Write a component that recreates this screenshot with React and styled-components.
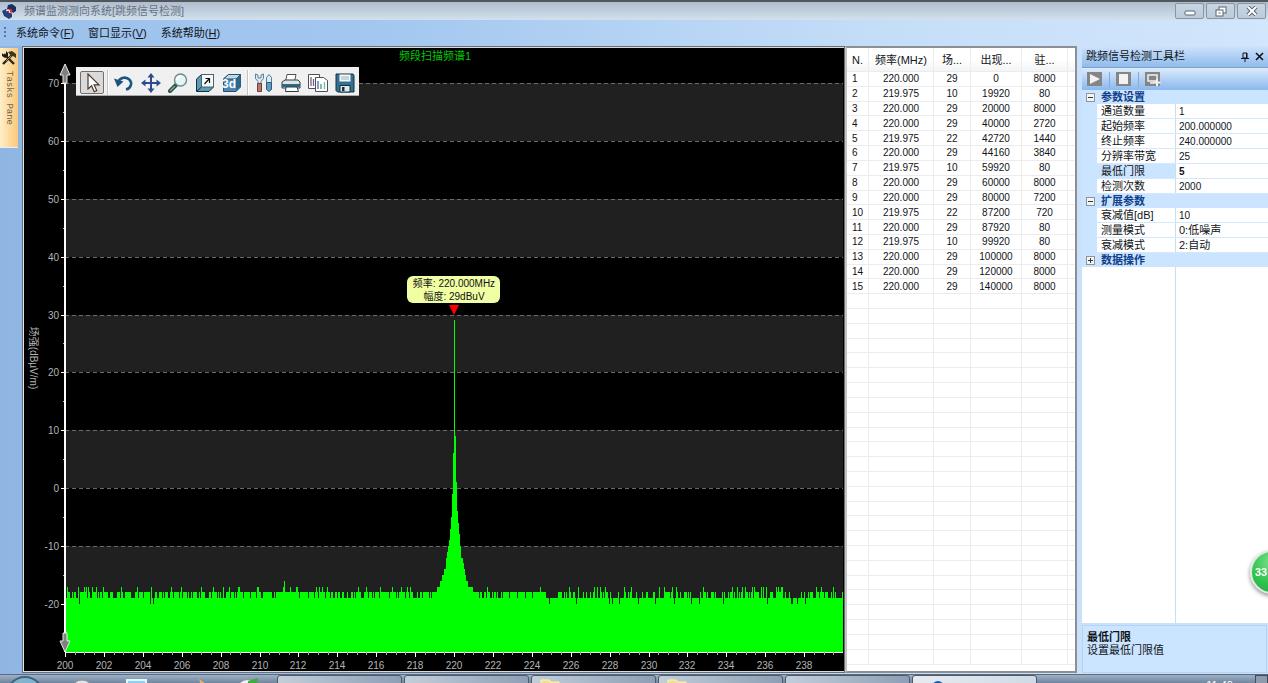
import React, { useLayoutEffect, useRef, useState } from "react";
import styled, { createGlobalStyle } from "styled-components";

const GlobalStyle = createGlobalStyle`
  * {
    box-sizing: border-box;
  }

  body {
    margin: 0;
    background: #8fb6e2;
    font-family: "Liberation Sans", "Noto Sans CJK SC", sans-serif;
    font-size: 11px;
    line-height: 15px;
    color: #101418;
  }

  button,
  input,
  select {
    font: inherit;
    color: inherit;
    margin: 0;
    padding: 0;
    border: none;
    background: none;
    appearance: none;
  }
`;

const Shell = styled.div`
  display: flex;
  flex-direction: column;
  height: 100vh;
  overflow: hidden;
  background: linear-gradient(90deg, #8fb6e2, #9fc3ea 30%, #c5def8 70%, #cfe4fb);
`;

/* ---------- title bar and menu ---------- */

const TitleBar = styled.header`
  display: flex;
  align-items: center;
  gap: 7px;
  height: 20px;
  flex-shrink: 0;
  padding-left: 2px;
  border-top: 2px solid #50565e;
  background: linear-gradient(#afbdcc, #d3e0ee);
`;

const AppTitle = styled.h1`
  margin: 0;
  flex: 1;
  font-size: 11px;
  font-weight: 400;
  color: #66727e;
`;

const WindowButtons = styled.div`
  display: flex;
  gap: 2px;
  padding-right: 2px;
`;

const WindowButton = styled.button`
  display: flex;
  align-items: center;
  justify-content: center;
  width: 29px;
  height: 16px;
  border: 1px solid #8895a5;
  border-radius: 2px;
  background: linear-gradient(#c8d4e2, #bccbdb);
`;

const MenuBar = styled.nav`
  display: flex;
  align-items: center;
  gap: 14px;
  height: 26px;
  flex-shrink: 0;
  padding-left: 4px;
  background: linear-gradient(90deg, #9bc1ec, #a3c7ef 30%, #c5def8 70%, #d2e6fc);
`;

const Grip = styled.span`
  width: 2px;
  height: 12px;
  margin-right: -4px;
  background: repeating-linear-gradient(#5877a0 0 2px, transparent 2px 4px);
`;

const MenuItem = styled.button`
  white-space: nowrap;
`;

/* ---------- work area ---------- */

const WorkArea = styled.main`
  display: flex;
  flex: 1;
  min-height: 0;
`;

const TaskStrip = styled.aside`
  width: 22px;
  flex-shrink: 0;
  padding-top: 2px;
`;

const TaskTab = styled.button`
  display: flex;
  flex-direction: column;
  align-items: center;
  gap: 5px;
  width: 18px;
  height: 100px;
  padding-top: 2px;
  border-bottom: 1px solid #e8eef6;
  background: linear-gradient(90deg, #ffeec8, #fbc978);
`;

const TaskLabel = styled.span`
  writing-mode: vertical-rl;
  font-family: "Liberation Mono", monospace;
  font-size: 9px;
  line-height: 12px;
  color: #6f6450;
`;

const ChartPanel = styled.section`
  position: relative;
  flex: 1;
  min-width: 0;
  margin-bottom: 1px;
  border: 2px solid #d8dade;
  border-left: 2px solid #e0e2e6;
  border-right: 1px solid #c8c8c8;
  outline: 1px solid #6a6e74;
  outline-offset: -1px;
  overflow: hidden;
  background: #000;
`;

const ChartSvg = styled.svg`
  display: block;
  font-family: "Liberation Sans", "Noto Sans CJK SC", sans-serif;
  font-size: 10px;
`;

const ChartToolbar = styled.div`
  position: absolute;
  left: 52px;
  top: 19px;
  display: flex;
  align-items: center;
  gap: 3px;
  height: 29px;
  padding: 3px 2px 0 4px;
  border-bottom: 1px solid #a8a8a8;
  background: #f0f0f0;
`;

const ChartButton = styled.button`
  display: flex;
  align-items: center;
  justify-content: center;
  width: 24px;
  height: 23px;
  border-radius: 2px;
  border: 1px solid ${(p) => (p.$active ? "#6f6f6f" : "transparent")};
  background: ${(p) => (p.$active ? "#dcdad8" : "none")};
`;

const ChartDivider = styled.span`
  width: 2px;
  height: 25px;
  border-left: 1px solid #c4c4c4;
  background: #fff;
`;

/* ---------- hop table ---------- */

const TablePanel = styled.section`
  width: 232px;
  flex-shrink: 0;
  margin-bottom: 1px;
  padding-bottom: 6px;
  border: 2px solid #8c8f94;
  border-left: 2px solid #c4c4c4;
  background: #fff;
`;

const HopTable = styled.table`
  width: 100%;
  height: 100%;
  table-layout: fixed;
  border-collapse: separate;
  border-spacing: 0;

  th,
  td {
    height: 14px;
    padding: 0;
    border-right: 1px solid #ececec;
    border-bottom: 1px solid #ececec;
    font-size: 10px;
    line-height: 13px;
    text-align: center;
    white-space: nowrap;
  }

  th {
    height: 24px;
    padding-top: 2px;
    font-size: 11px;
    font-weight: 400;
    background: linear-gradient(#fff 50%, #f3f4f6);
  }

  td:first-child,
  th:first-child {
    padding-left: 5px;
    text-align: left;
  }

  th:last-child,
  td:last-child {
    border-right: none;
  }
`;

/* ---------- property panel ---------- */

const SidePanel = styled.aside`
  display: flex;
  flex-direction: column;
  width: 191px;
  flex-shrink: 0;
  padding-left: 5px;
  background: #c9e1fb;
`;

const SideHeader = styled.header`
  display: flex;
  align-items: center;
  gap: 6px;
  height: 22px;
  flex-shrink: 0;
  padding: 0 4px;
  border-bottom: 1px solid #7f9fc6;
  background: linear-gradient(#cfe3fa, #8fbbed);
`;

const SideTitle = styled.h2`
  flex: 1;
  margin: 0;
  font-size: 11px;
  font-weight: 400;
`;

const IconButton = styled.button`
  display: flex;
  align-items: center;
  justify-content: center;
  width: 9px;
  height: 12px;
`;

const SideToolbar = styled.div`
  display: flex;
  align-items: center;
  gap: 6px;
  height: 22px;
  flex-shrink: 0;
  padding-left: 5px;
  background: linear-gradient(#dcebfd, #8ab8ee);
`;

const RunButton = styled.button`
  display: flex;
  width: 16px;
  height: 16px;
`;

const SideDivider = styled.span`
  width: 1px;
  height: 15px;
  background: #86a8d2;
`;

const PropertyArea = styled.div`
  flex: 1;
  min-height: 0;
  display: flex;
  flex-direction: column;
  background: #fff;
`;

const Category = styled.button`
  display: flex;
  align-items: center;
  gap: 6px;
  height: 14px;
  flex-shrink: 0;
  padding-left: 4px;
  font-weight: 700;
  color: #10418c;
  background: #cbe4ff;
`;

const Toggle = styled.span`
  display: flex;
  width: 9px;
  height: 9px;
`;

const PropertyRow = styled.div`
  display: grid;
  grid-template-columns: 79px 1fr;
  height: 15px;
  flex-shrink: 0;
  margin-left: 15px;
  border-bottom: 1px solid #d3e8fb;
`;

const PropertyName = styled.label`
  padding-left: 4px;
  border-right: 1px solid #c4e0f5;
  line-height: 14px;
  white-space: nowrap;
  background: ${(p) => (p.$selected ? "#cbe4ff" : "#fff")};
`;

const PropertyIndent = styled.div`
  flex-shrink: 0;
  background: linear-gradient(90deg, #cbe4ff 15px, #fff 15px);
`;

const PropertyInput = styled.input`
  width: 100%;
  height: 14px;
  padding-left: 3px;
  font-size: 10px;
  font-weight: ${(p) => (p.$selected ? 700 : 400)};
  outline: none;
`;

const PropertySelect = styled.select`
  width: 100%;
  height: 14px;
  padding-left: 3px;
  line-height: 14px;
  outline: none;
`;

const PropertyBlank = styled.div`
  flex: 1;
  width: 94px;
  border-right: 1px solid #c4e0f5;
`;

const Description = styled.section`
  height: 48px;
  flex-shrink: 0;
  margin: 2px 1px 1px 0;
  padding: 4px;
  border: 1px solid #b4d4f3;
  line-height: 13px;
  background: #cbe4ff;
`;

const DescriptionTitle = styled.h3`
  margin: 0;
  font-size: 11px;
  line-height: 14px;
`;

const Ball = styled.button`
  position: fixed;
  right: -26px;
  top: 550px;
  width: 44px;
  height: 44px;
  padding-left: 3px;
  border: 2px solid #dfe9e2;
  border-radius: 50%;
  font-weight: 700;
  text-align: left;
  color: #fff;
  background: radial-gradient(circle at 50% 25%, #7be28a, #2fc24e 60%, #28a845);
  box-shadow: 0 2px 4px rgba(0, 0, 0, 0.45);
`;

/* ---------- task bar ---------- */

const TaskBar = styled.footer`
  display: flex;
  align-items: flex-start;
  height: 9px;
  flex-shrink: 0;
  overflow: hidden;
  border-top: 1px solid #5c6a7c;
  background: linear-gradient(#9db0c6, #71879f);
`;

const QuickLaunch = styled.div`
  width: 277px;
  flex-shrink: 0;
`;

const TaskButtons = styled.div`
  display: flex;
  gap: 2px;
  flex: 1;
`;

const TaskButton = styled.button`
  width: 125px;
  height: 38px;
  padding-left: 8px;
  border: 1px solid #4d5a6b;
  border-radius: 3px;
  background: ${(p) =>
    p.$current
      ? "linear-gradient(90deg, #e6ebf1, #cfdae6)"
      : "linear-gradient(90deg, #c3cedb, #8c9fb5)"};
  display: flex;
  align-items: flex-start;
`;

const Clock = styled.time`
  margin: 3px 22px 0 0;
  color: #fff;
`;

const ShowDesktop = styled.button`
  width: 13px;
  height: 38px;
  border: 1px solid #3f4b5b;
  background: #8b9bb0;
`;

const hops = [
  ["220.000", 29, 0, 8000],
  ["219.975", 10, 19920, 80],
  ["220.000", 29, 20000, 8000],
  ["220.000", 29, 40000, 2720],
  ["219.975", 22, 42720, 1440],
  ["220.000", 29, 44160, 3840],
  ["219.975", 10, 59920, 80],
  ["220.000", 29, 60000, 8000],
  ["220.000", 29, 80000, 7200],
  ["219.975", 22, 87200, 720],
  ["220.000", 29, 87920, 80],
  ["219.975", 10, 99920, 80],
  ["220.000", 29, 100000, 8000],
  ["220.000", 29, 120000, 8000],
  ["220.000", 29, 140000, 8000],
];

const basicParams = [
  { id: "channels", name: "通道数量", value: "1" },
  { id: "start", name: "起始频率", value: "200.000000" },
  { id: "stop", name: "终止频率", value: "240.000000" },
  { id: "rbw", name: "分辨率带宽", value: "25" },
  { id: "threshold", name: "最低门限", value: "5", selected: true },
  { id: "count", name: "检测次数", value: "2000" },
];

const extraParams = [
  { id: "att", name: "衰减值[dB]", value: "10" },
  { id: "mode", name: "测量模式", options: ["0:低噪声"] },
  { id: "attMode", name: "衰减模式", options: ["2:自动"] },
];

/* ---------- icons ---------- */

const Icon = ({ size = 20, children }) => (
  <svg width={size} height={size} viewBox="0 0 20 20" aria-hidden="true">
    {children}
  </svg>
);

const chartTools = [
  {
    label: "选择",
    active: true,
    icon: (
      <path
        d="M6 1v15l3.6-3.2 2.6 6 2.6-1.2-2.7-5.8H17z"
        fill="#fff"
        stroke="#4a3a30"
        strokeWidth="1.2"
      />
    ),
  },
  null,
  {
    label: "撤销",
    icon: (
      <>
        <path d="M4.500 8.500a6.500 6 0 1 1 7.500 8" fill="none" stroke="#1c5580" strokeWidth="2.6" />
        <path d="M0 5.500l9.500 3-6 5.500z" fill="#1c5580" />
      </>
    ),
  },
  {
    label: "平移",
    icon: (
      <>
        <path d="M10 3v14M3 10h14" stroke="#2c4c8c" strokeWidth="2" />
        <path
          d="M10 0l3.5 4.5h-7zM10 20l3.5-4.5h-7zM0 10l4.5-3.5v7zM20 10l-4.5-3.5v7z"
          fill="#2c4c8c"
        />
      </>
    ),
  },
  {
    label: "缩放",
    icon: (
      <>
        <path d="M8 12l-6 6" stroke="#2d4a42" strokeWidth="4" strokeLinecap="round" />
        <path d="M7 13l-5 5" stroke="#6fae9a" strokeWidth="1.6" />
        <circle cx="12.5" cy="7" r="6" fill="#e4f6f6" stroke="#6e8c8c" strokeWidth="1.4" />
        <path d="M9 7a3.6 3.6 0 0 1 3.5-3.6" fill="none" stroke="#fff" strokeWidth="1.6" />
      </>
    ),
  },
  {
    label: "坐标",
    icon: (
      <>
        <path d="M1.500 6l5-4.500h12V14l-4.500 4.500H1.500z" fill="#5c9ab8" stroke="#16303e" />
        <path d="M6.500 1.500h12V14h-12z" fill="#f6fafa" stroke="#4a6470" />
        <path d="M2 18l4.500-4" stroke="#16303e" />
        <path d="M9.500 11l4.500-5M10.500 5.500h4V10" fill="none" stroke="#101010" strokeWidth="1.2" />
      </>
    ),
  },
  {
    label: "三维",
    icon: (
      <>
        <path d="M1.500 6l5-4.500h12V14l-4.500 4.500H1.500z" fill="#4d87b4" stroke="#2a506c" />
        <path d="M1.500 6l5-4.500h12L14 6z" fill="#b9dcea" stroke="#2a506c" />
        <path d="M14 6l4.500-4.500V14L14 18.500z" fill="#2e678e" />
        <text x="0" y="15" fontSize="12" fontWeight="700" fill="#fff">
          3d
        </text>
      </>
    ),
  },
  null,
  {
    label: "工具",
    icon: (
      <>
        <path d="M1.500 1v4.500l2.500 3v3h3v-3l2.500-3V1L7 2v3H4V2z" fill="#dceaf2" stroke="#55809c" />
        <path d="M3.500 10.500h4v8h-4z" fill="#b8746e" stroke="#6e3c3a" />
        <path d="M15 1.500l2.500 3v5h-5v-5z" fill="#dceaf2" stroke="#55809c" />
        <path d="M12.500 9.500h5v7l-2.500 2-2.500-2z" fill="#5e9cc2" stroke="#2c5a7a" />
      </>
    ),
  },
  {
    label: "打印",
    icon: (
      <>
        <path d="M6 1.500h9l-1.500 7h-9z" fill="#fff" stroke="#505050" />
        <path d="M1 9l3-2h13l2 2v6H1z" fill="#dfe4e4" stroke="#303c40" />
        <path d="M1 11h18v3H1z" fill="#2e6886" />
        <path d="M5 14h11l1.500 4.500h-13z" fill="#fff" stroke="#303c40" />
      </>
    ),
  },
  {
    label: "复制",
    icon: (
      <>
        <path d="M.5 1.500h11v14H.5z" fill="#fff" stroke="#505050" />
        <path d="M3 4v9M5.500 6v7" stroke="#7a5c8c" strokeWidth="1.3" />
        <path d="M7.500 4.500h8l4 3v11h-12z" fill="#fff" stroke="#505050" />
        <path d="M10 8v8" stroke="#3c6cae" strokeWidth="1.3" />
        <path d="M13 11v5" stroke="#3c9c6c" strokeWidth="1.3" />
        <path d="M16.500 9v7" stroke="#6ab8c0" strokeWidth="1.3" />
      </>
    ),
  },
  {
    label: "保存",
    icon: (
      <>
        <path d="M1 1h17l1 1.500V19H2.500L1 17.500z" fill="#34708f" stroke="#14303f" />
        <path d="M4.500 1.500h11v7h-11z" fill="#f4f8f8" />
        <path d="M6 4h8M6 6h8" stroke="#9ab0b8" />
        <path d="M5 12.500h10V19H5z" fill="#dfe8ea" stroke="#14303f" />
        <path d="M7 14h2.500v4H7z" fill="#14303f" />
      </>
    ),
  },
];

const AppLogo = () => (
  <svg width="15" height="15" viewBox="0 0 15 15" aria-hidden="true">
    <path d="M6 1l4-1 4 3v4l-3 2-2-3-4-1z" fill="#1d2d5e" />
    <path d="M0 7l4-2 2 2 4 3v3l-3 2-5-3z" fill="#27407c" />
    <circle cx="8" cy="7" r="2.300" fill="#d43a34" />
    <path d="M4 7l3-1 1 3" stroke="#fff" fill="none" />
  </svg>
);

const HammerIcon = () => (
  <svg width="16" height="16" viewBox="0 0 16 16" aria-hidden="true">
    <path d="M3 4l10 10" stroke="#2b2620" strokeWidth="2.400" />
    <path d="M12 4L2 14" stroke="#2b2620" strokeWidth="2.400" />
    <path d="M11 5l-6 6" stroke="#b79a4a" />
    <path d="M7 2l4-1 4 3v4l-3-2-2 0z" fill="#3a3a20" />
    <path d="M1 3l2 2 2-1 0-3 2 2v3L4 8 1 6z" fill="#1c1c1c" />
  </svg>
);

/* ---------- spectrum chart ---------- */

const X_MIN = 200;
const X_MAX = 240;
const Y_TOP = 70;
const Y_BOTTOM = -28.3;
const LEFT = 41;
const TOP = 35;

const range = (from, to, step) => {
  const out = [];
  for (let v = from; v <= to; v += step) out.push(v);
  return out;
};

// skirts of the carrier: [distance from centre in px, level in dB]
const leftSkirt = [
  [1, 6],
  [2, -1],
  [3, -5],
  [4, -7],
  [5, -9],
  [6, -10],
  [7, -11],
  [8, -12],
  [10, -14],
  [12, -15],
  [14, -16],
  [17, -17],
  [21, -18],
];
const rightSkirt = [
  [1, 9],
  [2, 1],
  [3, -4],
  [4, -6],
  [5, -8],
  [6, -10],
  [8, -12],
  [9, -13],
  [10, -14],
  [11, -15],
  [13, -16],
  [18, -17],
  [24, -18],
];

const skirtLevel = (d) => {
  if (d === 0) return 29;
  const found = (d < 0 ? leftSkirt : rightSkirt).find(([limit]) => Math.abs(d) <= limit);
  return found ? found[1] : -40;
};

const makeTrace = (count, centre) => {
  let seed = 90210;
  const random = () => {
    seed = (seed * 48271) % 2147483647;
    return seed / 2147483647;
  };
  return range(0, count - 1, 1).map((i) => {
    const r = random();
    const far = i / count > 0.62;
    let level = -18;
    if (r < 0.09) level = -17;
    else if (r < 0.093) level = -16;
    else if (r > (far ? 0.96 : 0.99)) level = -20;
    else if (r > (far ? 0.4 : 0.66)) level = -19;
    return Math.max(level, skirtLevel(i - centre));
  });
};

const SpectrumChart = ({ width, height }) => {
  const right = width - 1;
  const bottom = height - 19;
  const sx = (f) => LEFT + ((f - X_MIN) / (X_MAX - X_MIN)) * (right - LEFT);
  const sy = (v) => TOP + ((Y_TOP - v) / (Y_TOP - Y_BOTTOM)) * (bottom - TOP);
  const peakX = Math.round(sx(220));
  const trace = makeTrace(Math.floor(right - LEFT), peakX - LEFT);
  const area = trace
    .map((v, i) => `V${Math.round(sy(v))}H${LEFT + i + 1}`)
    .join("");
  const peakY = Math.round(sy(29));

  return (
    <ChartSvg width={width} height={height} role="img" aria-label="频段扫描频谱1">
      {range(-20, 60, 20).map((v) => {
        const y = Math.round(sy(v + 10));
        const end = v === -20 ? bottom : Math.round(sy(v));
        return <rect key={v} x={LEFT} y={y} width={right - LEFT} height={end - y} fill="#202020" />;
      })}
      {range(-20, 70, 10).map((v) => (
        <g key={v}>
          <path
            d={`M${LEFT} ${Math.round(sy(v)) + 0.5}H${right}`}
            stroke="#6a6a6a"
            strokeDasharray="4 3"
          />
          <path d={`M${LEFT - 4} ${Math.round(sy(v)) + 0.5}h4`} stroke="#fff" />
          <text x={LEFT - 6} y={Math.round(sy(v)) + 4} textAnchor="end" fill="#b4b4b4">
            {v}
          </text>
        </g>
      ))}
      {range(-15, 65, 10).map((v) => (
        <path key={v} d={`M${LEFT - 2} ${Math.round(sy(v)) + 0.5}h2`} stroke="#bbb" />
      ))}
      <path d={`M${LEFT} ${bottom}${area}V${bottom}z`} fill="#00ff00" shapeRendering="crispEdges" />

      <path d={`M${LEFT} 20V${bottom}`} stroke="#fff" strokeWidth="2" />
      <path d={`M${LEFT} ${bottom + 0.5}H${right}`} stroke="#e8ffe8" />
      {range(200, 239.5, 0.5).map((f) => (
        <path
          key={f}
          d={`M${Math.round(sx(f)) + 0.5} ${bottom}v${f % 2 === 0 ? 5 : 3}`}
          stroke={f % 2 === 0 ? "#fff" : "#aaa"}
        />
      ))}
      {range(200, 238, 2).map((f) => (
        <text key={f} x={Math.round(sx(f))} y={bottom + 17} textAnchor="middle" fill="#b4b4b4">
          {f}
        </text>
      ))}
      <path
        d={`M${LEFT} 16l5 11h-3v8h-4v-8h-3z`}
        fill="#808080"
        stroke="#e8e8e8"
      />
      <path
        d={`M${LEFT} ${bottom}l-5-11h3v-8h4v8h3z`}
        fill="#808080"
        stroke="#e8e8e8"
      />

      <text x={width / 2 + 1} y="12" fontSize="11" textAnchor="middle" fill="#00c800">
        频段扫描频谱1
      </text>
      <text
        transform={`translate(6 ${bottom / 2 + 8}) rotate(90)`}
        textAnchor="middle"
        fill="#b4b4b4"
      >
        场强(dBµV/m)
      </text>

      <rect
        x={peakX - 47}
        y={peakY - 44}
        width="93"
        height="27"
        rx="6"
        fill="#f0ffa4"
      />
      <text x={peakX} y={peakY - 33} textAnchor="middle" fill="#101010">
        频率: 220.000MHz
      </text>
      <text x={peakX} y={peakY - 20} textAnchor="middle" fill="#101010">
        幅度: 29dBuV
      </text>
      <path d={`M${peakX - 5} ${peakY - 15}h10l-5 10z`} fill="#ff0000" />
    </ChartSvg>
  );
};

const Spectrum = () => {
  const panel = useRef(null);
  const [size, setSize] = useState(null);

  useLayoutEffect(() => {
    const measure = () =>
      setSize({ width: panel.current.clientWidth, height: panel.current.clientHeight });
    measure();
    window.addEventListener("resize", measure);
    return () => window.removeEventListener("resize", measure);
  }, []);

  return (
    <ChartPanel ref={panel}>
      {size && <SpectrumChart width={size.width} height={size.height} />}
      <ChartToolbar role="toolbar">
        {chartTools.map((tool, i) =>
          tool ? (
            <ChartButton key={i} type="button" title={tool.label} $active={tool.active}>
              <Icon>{tool.icon}</Icon>
            </ChartButton>
          ) : (
            <ChartDivider key={i} />
          )
        )}
      </ChartToolbar>
    </ChartPanel>
  );
};

const HopList = () => (
  <TablePanel>
    <HopTable>
      <colgroup>
        <col width="22" />
        <col width="65" />
        <col width="37" />
        <col width="51" />
        <col width="46" />
        <col />
      </colgroup>
      <thead>
        <tr>
          <th>N.</th>
          <th>频率(MHz)</th>
          <th>场...</th>
          <th>出现...</th>
          <th>驻...</th>
          <th />
        </tr>
      </thead>
      <tbody>
        {range(0, 39, 1).map((i) => {
          const row = hops[i];
          return (
            <tr key={i}>
              <td>{row ? i + 1 : ""}</td>
              {[0, 1, 2, 3].map((c) => (
                <td key={c}>{row ? row[c] : ""}</td>
              ))}
              <td />
            </tr>
          );
        })}
      </tbody>
    </HopTable>
  </TablePanel>
);

const ToggleMark = ({ open }) => (
  <Toggle>
    <svg width="9" height="9" viewBox="0 0 9 9" aria-hidden="true">
      <rect x=".5" y=".5" width="8" height="8" fill="#f4f4f4" stroke="#8c949c" />
      <path d={open ? "M2 4.500h5" : "M2 4.500h5M4.500 2v5"} stroke="#303840" />
    </svg>
  </Toggle>
);

const PropertyGroup = ({ title, params = [] }) => (
  <>
    <Category type="button">
      <ToggleMark open={params.length > 0} />
      {title}
    </Category>
    <PropertyIndent>
      {params.map((p) => (
        <PropertyRow key={p.id}>
          <PropertyName htmlFor={p.id} $selected={p.selected}>
            {p.name}
          </PropertyName>
          {p.options ? (
            <PropertySelect id={p.id}>
              {p.options.map((o) => (
                <option key={o}>{o}</option>
              ))}
            </PropertySelect>
          ) : (
            <PropertyInput id={p.id} type="text" defaultValue={p.value} $selected={p.selected} />
          )}
        </PropertyRow>
      ))}
    </PropertyIndent>
  </>
);

const DetectionPanel = () => (
  <SidePanel>
    <SideHeader>
      <SideTitle>跳频信号检测工具栏</SideTitle>
      <IconButton type="button" aria-label="固定">
        <svg width="8" height="10" viewBox="0 0 8 10">
          <path d="M2 1h4v5H2zM0 6.500h8M4 6v4M5.500 1v5" fill="none" stroke="#101418" />
        </svg>
      </IconButton>
      <IconButton type="button" aria-label="关闭">
        <svg width="9" height="9" viewBox="0 0 9 9">
          <path d="M1 1l7 7M8 1L1 8" stroke="#101418" strokeWidth="1.600" />
        </svg>
      </IconButton>
    </SideHeader>
    <SideToolbar>
      <RunButton type="button" aria-label="开始">
        <svg width="16" height="16" viewBox="0 0 16 16">
          <path d="M0 1h15v14H0z" fill="#858585" />
          <path d="M3 3l10 5-10 5z" fill="#f2f2f2" />
        </svg>
      </RunButton>
      <SideDivider />
      <RunButton type="button" aria-label="停止">
        <svg width="16" height="16" viewBox="0 0 16 16">
          <path d="M0 1h15v14H0z" fill="#858585" />
          <path d="M3 3h9v10H3z" fill="#f2f2f2" />
        </svg>
      </RunButton>
      <SideDivider />
      <RunButton type="button" aria-label="导出">
        <svg width="16" height="16" viewBox="0 0 16 16">
          <path d="M0 1h15v14H0z" fill="#858585" />
          <path d="M3 4h9v6H3zM5 12h4" fill="none" stroke="#f2f2f2" strokeWidth="1.500" />
          <path d="M12 8v7M8.500 11.500h7" stroke="#f2f2f2" strokeWidth="2" />
        </svg>
      </RunButton>
    </SideToolbar>
    <PropertyArea>
      <PropertyGroup title="参数设置" params={basicParams} />
      <PropertyGroup title="扩展参数" params={extraParams} />
      <PropertyGroup title="数据操作" />
      <PropertyBlank />
    </PropertyArea>
    <Description>
      <DescriptionTitle>最低门限</DescriptionTitle>
      设置最低门限值
    </Description>
  </SidePanel>
);

const DesktopBar = () => (
  <TaskBar>
    <QuickLaunch>
      <svg width="277" height="38" viewBox="0 0 277 38" aria-hidden="true">
        <circle cx="25" cy="20" r="18" fill="#7fb4d0" stroke="#41617c" strokeWidth="2" />
        <circle cx="82" cy="16" r="11" fill="#dfe3e6" stroke="#8a949e" />
        <path d="M127 5h19v20h-19z" fill="#8fd0ee" stroke="#e6f6ff" strokeWidth="2" />
        <path d="M199 4l10 7v10h-5z" fill="#eeb060" />
        <circle cx="248" cy="17" r="12" fill="#f0f4f0" />
        <path d="M248 6l10-3-2 10-8 2z" fill="#3fae3a" />
      </svg>
    </QuickLaunch>
    <TaskButtons>
      <TaskButton type="button" aria-label="窗口 1" />
      <TaskButton type="button" aria-label="窗口 2" />
      <TaskButton type="button" aria-label="文件夹 1">
        <svg width="20" height="20" viewBox="0 0 20 20">
          <path d="M1 4h8l2 2h8v13H1z" fill="#f3e08a" stroke="#fff3b8" />
        </svg>
      </TaskButton>
      <TaskButton type="button" aria-label="文件夹 2">
        <svg width="20" height="20" viewBox="0 0 20 20">
          <path d="M1 4h8l2 2h8v13H1z" fill="#f3e08a" stroke="#fff3b8" />
        </svg>
      </TaskButton>
      <TaskButton type="button" aria-label="窗口 3" />
      <TaskButton type="button" aria-label="频谱监测" $current>
        <svg width="30" height="20" viewBox="0 0 30 20">
          <circle cx="17" cy="11" r="6" fill="#1c5aa4" />
        </svg>
      </TaskButton>
    </TaskButtons>
    <Clock>11:40</Clock>
    <ShowDesktop type="button" aria-label="显示桌面" />
  </TaskBar>
);

const App = () => (
  <>
    <GlobalStyle />
    <Shell>
      <TitleBar>
        <AppLogo />
        <AppTitle>频谱监测测向系统[跳频信号检测]</AppTitle>
        <WindowButtons>
          <WindowButton type="button" aria-label="最小化">
            <svg width="12" height="10" viewBox="0 0 12 10">
              <rect x="1" y="5" width="10" height="4" rx="1" fill="#fff" stroke="#5a6470" />
            </svg>
          </WindowButton>
          <WindowButton type="button" aria-label="还原">
            <svg width="12" height="11" viewBox="0 0 12 11">
              <rect x="4" y="1" width="7" height="6" fill="#fff" stroke="#5a6470" />
              <rect x="1" y="4" width="7" height="6" fill="#fff" stroke="#5a6470" />
              <rect x="3.500" y="6.500" width="2" height="1" fill="#5a6470" />
            </svg>
          </WindowButton>
          <WindowButton type="button" aria-label="关闭">
            <svg width="12" height="10" viewBox="0 0 12 10">
              <path d="M2 1l8 8M10 1L2 9" stroke="#5a6470" strokeWidth="4" />
              <path d="M2 1l8 8M10 1L2 9" stroke="#fff" strokeWidth="2" />
            </svg>
          </WindowButton>
        </WindowButtons>
      </TitleBar>
      <MenuBar>
        <Grip />
        <MenuItem type="button">
          系统命令(<u>F</u>)
        </MenuItem>
        <MenuItem type="button">
          窗口显示(<u>V</u>)
        </MenuItem>
        <MenuItem type="button">
          系统帮助(<u>H</u>)
        </MenuItem>
      </MenuBar>
      <WorkArea>
        <TaskStrip>
          <TaskTab type="button">
            <HammerIcon />
            <TaskLabel>Tasks Pane</TaskLabel>
          </TaskTab>
        </TaskStrip>
        <Spectrum />
        <HopList />
        <DetectionPanel />
      </WorkArea>
      <DesktopBar />
    </Shell>
    <Ball type="button">33</Ball>
  </>
);

export default App;
